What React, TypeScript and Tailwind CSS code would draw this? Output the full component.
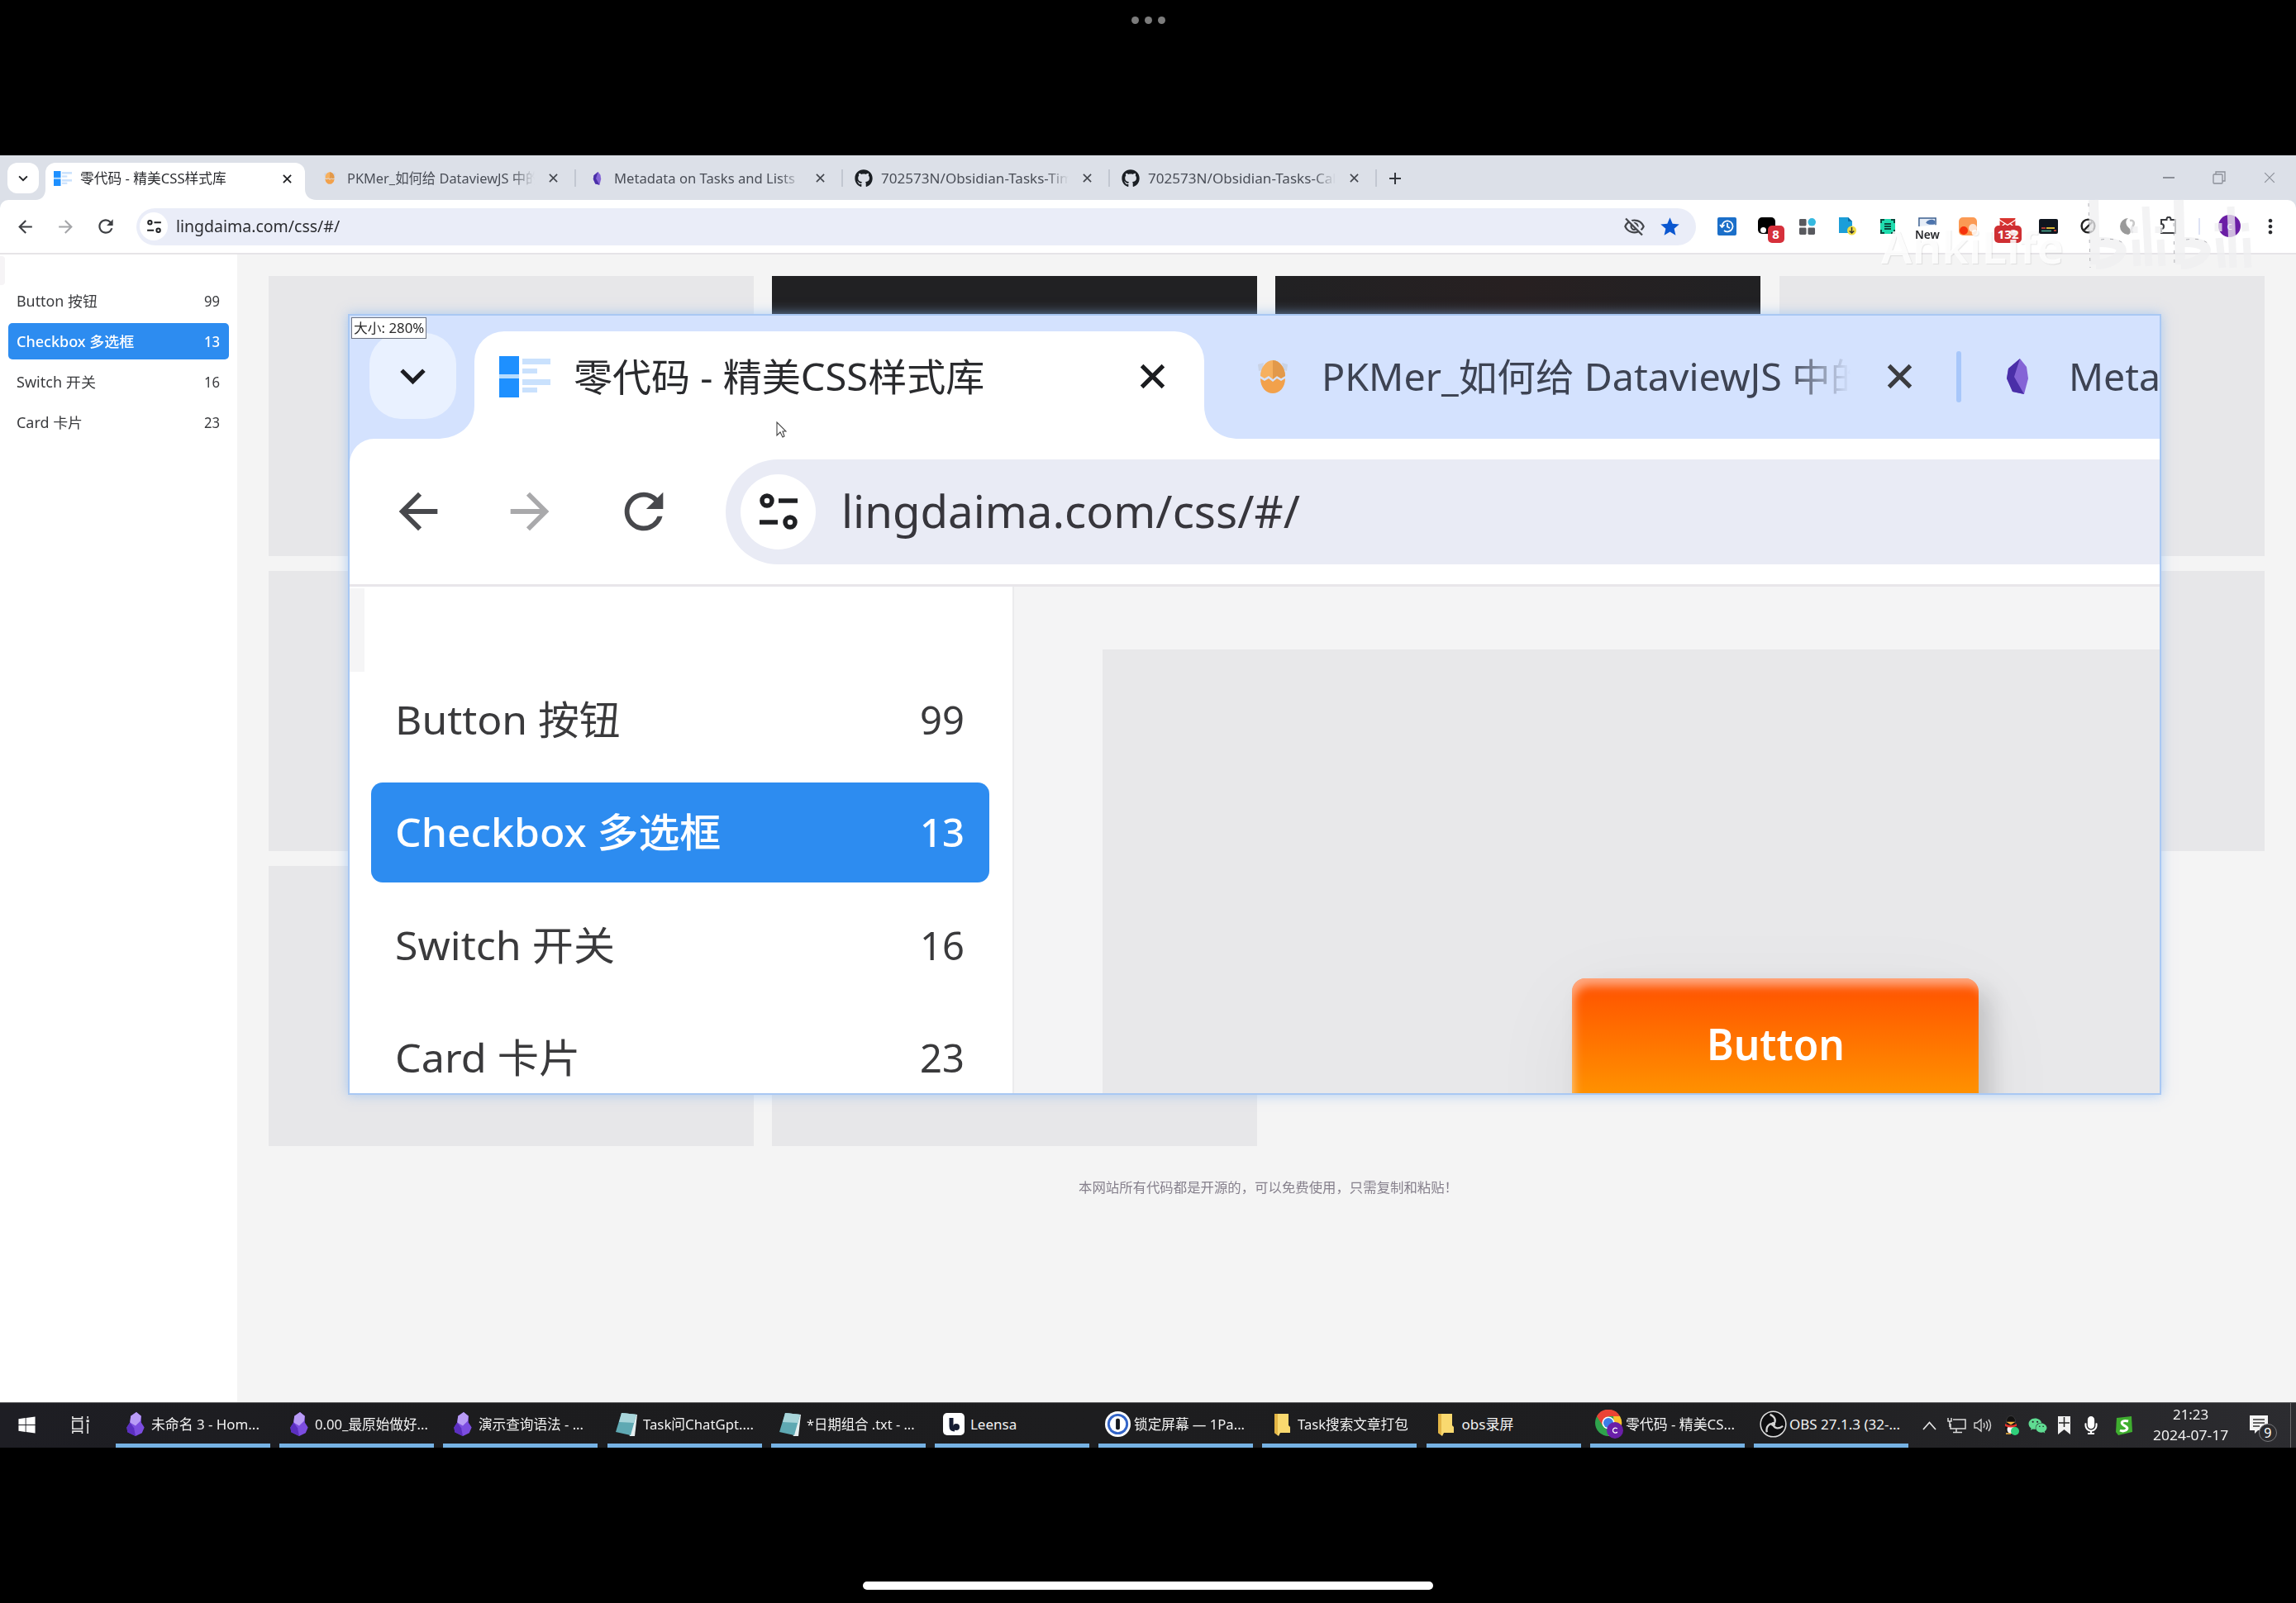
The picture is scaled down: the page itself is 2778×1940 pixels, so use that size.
import React, { useLayoutEffect, useRef, useState } from "react";
import {
  MdArrowBack,
  MdArrowForward,
  MdRefresh,
  MdStar,
  MdMoreVert,
  MdOutlineVisibilityOff,
  MdOutlineExtension,
} from "react-icons/md";
import { FaGithub, FaWindows, FaWeixin, FaMicrophone } from "react-icons/fa";

/** Single line of text squeezed or stretched horizontally to a fixed width. */
function Fit({ w, className = "", children }: { w: number; className?: string; children: React.ReactNode }) {
  const ref = useRef<HTMLSpanElement>(null);
  const [scale, setScale] = useState(1);
  useLayoutEffect(() => {
    if (ref.current) setScale(w / ref.current.offsetWidth);
  }, [w]);
  return (
    <span className={"block shrink-0 leading-[1.4] " + className} style={{ width: w }}>
      <span
        ref={ref}
        className="inline-block origin-left whitespace-nowrap align-top"
        style={{ transform: `scaleX(${scale})` }}
      >
        {children}
      </span>
    </span>
  );
}

function Cross({ className, stroke = 2 }: { className: string; stroke?: number }) {
  return (
    <svg viewBox="0 0 12 12" className={className} preserveAspectRatio="none">
      <path d="M1 1 11 11M11 1 1 11" stroke="currentColor" strokeWidth={stroke} fill="none" />
    </svg>
  );
}

function Chevron({ className }: { className: string }) {
  return (
    <svg viewBox="0 0 32 20" className={className}>
      <path d="M3 3 16 16 29 3" stroke="currentColor" strokeWidth="5" fill="none" />
    </svg>
  );
}

function SiteLogo({ className }: { className: string }) {
  return (
    <svg viewBox="0 0 62 50" className={className} preserveAspectRatio="none">
      <rect width="24" height="22" fill="#1e90ff" />
      <rect y="22" width="24" height="5" fill="#b5dcff" />
      <rect y="27" width="24" height="23" fill="#1e90ff" />
      <rect x="28" y="3" width="34" height="7" fill="#c9e1fd" />
      <rect x="28" y="15" width="18" height="6" fill="#c9e1fd" />
      <rect x="28" y="28" width="34" height="7" fill="#c9e1fd" />
      <rect x="28" y="38" width="18" height="6" fill="#c9e1fd" />
    </svg>
  );
}

function EggLogo({ className }: { className: string }) {
  return (
    <svg viewBox="0 0 38 40" className={className}>
      <path d="M1 5 8 3 6 12 2 13ZM37 5 30 3 32 12 36 13Z" fill="#c9d3e6" />
      <path d="M19 0C28 0 34 10 34 19L29 22 24 19 19 23 14 19 9 22 4 19C4 10 10 0 19 0Z" fill="#f6b05e" />
      <path d="M4 22 9 25 14 22 19 26 24 22 29 25 34 22C34 33 27 40 19 40S4 33 4 22Z" fill="#f2a14b" />
      <path d="M19 0C28 0 34 10 34 19L29 22 24 19 19 23Z" fill="#e2994a" />
    </svg>
  );
}

function GemLogo({ className }: { className: string }) {
  return (
    <svg viewBox="0 0 28 44" className={className}>
      <path d="M17 0 25 10 27 24 22 43 8 40 1 24 3 12Z" fill="#8464d6" />
      <path d="M17 0 3 12 1 24 8 40 22 43 10 22Z" fill="#4a2fa8" />
    </svg>
  );
}

function Sliders({ className }: { className: string }) {
  return (
    <svg viewBox="0 0 46 44" className={className}>
      <g fill="none" stroke="#1f2023" strokeWidth="5.5">
        <circle cx="9" cy="9" r="6" />
        <path d="M23 9H46M0 35H22" />
        <circle cx="37" cy="35" r="6" />
      </g>
    </svg>
  );
}

/** Concave corner that joins a tab to the toolbar below. */
function Flare({ className, flip }: { className: string; flip?: boolean }) {
  return (
    <svg viewBox="0 0 10 10" className={className} preserveAspectRatio="none">
      <path d={flip ? "M0 0V10H10C4 10 0 6 0 0Z" : "M10 0V10H0C6 10 10 6 10 0Z"} fill="#fff" />
    </svg>
  );
}

const tabs = [
  { title: "PKMer_如何给 DataviewJS 中的", w: 232, icon: <EggLogo className="h-[15px] w-[14px]" /> },
  { title: "Metadata on Tasks and Lists", w: 219, icon: <GemLogo className="h-[16px] w-[11px]" /> },
  { title: "702573N/Obsidian-Tasks-Tim", w: 232, icon: <FaGithub className="size-[22px] text-[#1b1f24]" /> },
  { title: "702573N/Obsidian-Tasks-Cal", w: 228, icon: <FaGithub className="size-[22px] text-[#1b1f24]" /> },
];

function TabStrip() {
  return (
    <div className="flex h-[54px] items-start bg-[#dce0e8]">
      <div className="mt-[9px] ml-[9px] flex h-[37px] w-[38px] shrink-0 items-center justify-center rounded-[12px] bg-white text-[#1f2023]">
        <Chevron className="h-[8px] w-[12px]" />
      </div>
      <div className="relative mt-[9px] ml-[8px] flex h-[45px] w-[314px] shrink-0 items-center rounded-t-[12px] bg-white pb-[7px] pl-[10px]">
        <Flare className="absolute bottom-0 -left-[12px] h-[13px] w-[12px]" />
        <Flare flip className="absolute -right-[14px] bottom-0 h-[13px] w-[14px]" />
        <SiteLogo className="h-[18px] w-[22px]" />
        <Fit w={177} className="ml-[10px] text-[17px] text-[#2b2c30]">零代码 - 精美CSS样式库</Fit>
        <Cross className="ml-[68px] size-[11px] text-[#1f2023]" />
      </div>
      <div className="mt-[8px] ml-[5px] flex">
        {tabs.map((t) => (
          <div key={t.title} className="flex h-[39px] w-[323px] items-center">
            <div className="ml-[13px] flex w-[24px] justify-center">{t.icon}</div>
            <div className="ml-[9px] w-[227px] overflow-hidden text-[17px] text-[#4a4e57] [mask-image:linear-gradient(to_right,black_88%,transparent)]">
              <Fit w={t.w}>{t.title}</Fit>
            </div>
            <Cross className="ml-[17px] size-[11px] text-[#44474e]" stroke={1.8} />
            <div className="ml-auto h-[21px] w-[2px] bg-[#c2c7d1]" />
          </div>
        ))}
        <svg viewBox="0 0 14 14" className="mt-[13px] ml-[15px] size-[14px]">
          <path d="M7 0V14M0 7H14" stroke="#33363c" strokeWidth="2" />
        </svg>
      </div>
      <div className="mt-[19px] mr-[25px] ml-auto flex items-center text-[#8b8f98]">
        <div className="h-[1.5px] w-[14px] bg-current" />
        <svg viewBox="0 0 16 16" className="ml-[46px] size-[16px]" fill="none" stroke="currentColor" strokeWidth="1.3">
          <rect x="1" y="4" width="11" height="11" rx="1" />
          <path d="M4 4V1H15V12H12" />
        </svg>
        <Cross className="ml-[46px] size-[14px]" stroke={1} />
      </div>
    </div>
  );
}

function Extensions() {
  return (
    <div className="mt-[22px] ml-[13px] flex h-[44px] items-start">
      <div className="flex w-[48.6px] justify-center">
        <svg viewBox="0 0 23 22" className="h-[22px] w-[23px]">
          <rect width="23" height="22" rx="2" fill="#1b6fc9" />
          <path d="M5.5 11A6.5 6.5 0 1 1 8 16M3 9 5.5 12 8.5 9M12 7V11.5L15 13" fill="none" stroke="#fff" strokeWidth="1.7" />
        </svg>
      </div>
      <div className="relative flex w-[48.6px] justify-center">
        <div className="flex h-[20px] w-[21px] items-end rounded-[5px] bg-black pb-px pl-[3px]">
          <div className="size-[7px] rounded-full bg-white" />
        </div>
        <div className="absolute top-[10px] left-[25px] flex h-[21px] w-[20px] items-center justify-center rounded-[5px] bg-[#d6303b] text-[15px] leading-none font-bold text-white">8</div>
      </div>
      <div className="flex w-[48.6px] justify-center">
        <svg viewBox="0 0 22 22" className="mt-px size-[21px]">
          <rect x="1" y="1" width="9" height="9" rx="1.5" fill="#58595e" />
          <rect x="1" y="12" width="9" height="9" rx="1.5" fill="#58595e" />
          <rect x="12" y="12" width="9" height="9" rx="1.5" fill="#58595e" />
          <circle cx="17" cy="5" r="5" fill="#35b9e0" />
        </svg>
      </div>
      <div className="flex w-[48.6px] justify-center">
        <svg viewBox="0 0 22 22" className="size-[22px]">
          <path d="M1 0H12L17 5V19H1Z" fill="#1b9ed8" />
          <path d="M12 0V5H17Z" fill="#0b6ea8" />
          <circle cx="16.5" cy="16" r="5.5" fill="#f1dc42" />
          <path d="M16.5 12V19M13.7 16.5 16.5 19 19.3 16.5" stroke="#333" strokeWidth="1.5" fill="none" />
        </svg>
      </div>
      <div className="flex w-[48.6px] justify-center">
        <svg viewBox="0 0 18 18" className="mt-[2px] size-[18px]">
          <rect width="18" height="18" rx="2" fill="#1fdcae" />
          <path d="M1 5V1H5M13 1H17V5M17 13V17H13M5 17H1V13M5 6H13M5 9H13M5 12H13" stroke="#0b4a3e" strokeWidth="2" fill="none" />
        </svg>
      </div>
      <div className="flex w-[48.6px] flex-col items-center">
        <svg viewBox="0 0 24 12" className="h-[11px] w-[24px]">
          <path d="M1 12V1H23V10" stroke="#3c5f8f" strokeWidth="1.6" fill="#e6edf7" />
          <path d="M10 7C13 2 20 2 22 5V9C18 10 12 10 10 7Z" fill="#4d74ad" />
        </svg>
        <Fit w={30} className="-mt-px text-[15px] font-semibold text-[#26272b]">New</Fit>
      </div>
      <div className="flex w-[48.6px] justify-center">
        <svg viewBox="0 0 22 22" className="size-[22px]">
          <rect width="22" height="22" rx="5" fill="#fb9a54" />
          <circle cx="17" cy="13" r="5" fill="#fde3d2" />
          <circle cx="6" cy="16" r="5" fill="#f6330c" />
        </svg>
      </div>
      <div className="relative flex w-[48.6px] justify-center">
        <svg viewBox="0 0 24 14" className="mt-px h-[12px] w-[24px]">
          <path d="M1 0H23V14H1Z" fill="#d8342f" />
          <path d="M0 2 12 10 24 2M1 14 9 7M23 14 15 7" stroke="#fff" strokeWidth="1.5" fill="none" />
        </svg>
        <div className="absolute top-[10px] left-[8px] flex h-[21px] w-[33px] items-center justify-center rounded-[5px] bg-[#cf2f33] text-[15px] leading-none font-bold text-white">132</div>
      </div>
      <div className="flex w-[48.6px] justify-center">
        <svg viewBox="0 0 23 18" className="mt-[2px] h-[18px] w-[23px]">
          <rect width="23" height="18" rx="2" fill="#10161f" />
          <path d="M3 11H8M18 14H21" stroke="#e24b3b" strokeWidth="1.6" />
          <path d="M9 11H19" stroke="#f0c93a" strokeWidth="1.8" />
          <path d="M3 14.5H15" stroke="#49a98f" strokeWidth="1.6" />
        </svg>
      </div>
      <div className="flex w-[48.6px] justify-center">
        <svg viewBox="0 0 20 20" className="mt-px size-[19px]">
          <circle cx="10" cy="10" r="8.3" fill="none" stroke="#222" strokeWidth="2.6" />
          <path d="M10 10 16 4V16L5 15Z" fill="#d8d8d8" />
          <path d="M5 15 15 5" stroke="#222" strokeWidth="2.6" />
        </svg>
      </div>
      <div className="flex w-[48.6px] justify-center">
        <svg viewBox="0 0 22 22" className="size-[22px]">
          <path d="M11 1A10 10 0 0 0 11 21C16 19 14 14 11 12C8 9 7 4 11 1Z" fill="#9a9a9a" />
          <path d="M13 4C17 3 19 6 17 10S13 17 17 18" fill="none" stroke="#c9c9c9" strokeWidth="2.6" />
        </svg>
      </div>
      <div className="flex w-[48.6px] justify-center">
        <svg viewBox="0 0 22 22" className="-mt-px size-[22px]" fill="none" stroke="#3a3b3f" strokeWidth="2">
          <path d="M2 4H8.500V3.200A2.500 2.500 0 0 1 13.500 3.200V4H19V20H2V15A3 3 0 0 0 2 9Z" />
        </svg>
      </div>
      <div className="mt-[1px] ml-[12px] h-[20px] w-[2px] bg-[#dfe3f5]" />
      <div className="-mt-[3px] ml-[22px] flex size-[27px] items-center justify-center rounded-full bg-[#6b1ea5] text-[13px] text-white">c</div>
      <MdMoreVert className="-mt-[3px] ml-[22px] size-[28px] shrink-0 text-[#2a2b2f]" />
    </div>
  );
}

function Toolbar() {
  return (
    <div className="bg-[#dce0e8]">
      <div className="flex h-[64px] items-center rounded-t-[10px] bg-white">
        <div className="ml-[17px] flex w-[26px] justify-center"><MdArrowBack className="size-[25px] shrink-0 text-[#3d3f43]" /></div>
        <div className="ml-[23px] flex w-[26px] justify-center"><MdArrowForward className="size-[25px] shrink-0 text-[#a4a5a8]" /></div>
        <div className="ml-[23px] flex w-[26px] justify-center"><MdRefresh className="size-[26px] shrink-0 text-[#3d3f43]" /></div>
        <div className="ml-[24px] flex h-[45px] w-[1887px] shrink-0 items-center rounded-full bg-[#eaedf8]">
          <div className="ml-[4px] flex h-[34px] w-[34px] items-center justify-center rounded-full bg-white">
            <Sliders className="h-[16px] w-[17px]" />
          </div>
          <Fit w={198} className="ml-[10px] pt-px text-[19px] text-[#2b2c30]">lingdaima.com/css/#/</Fit>
          <MdOutlineVisibilityOff className="ml-auto size-[27px] text-[#45474c]" />
          <MdStar className="mr-[18px] ml-[16px] size-[27px] text-[#0b57d0]" />
        </div>
        <Extensions />
      </div>
    </div>
  );
}

const menu = [
  { name: "Button 按钮", count: "99", w: 98, big: 273 },
  { name: "Checkbox 多选框", count: "13", w: 142, big: 394, active: true },
  { name: "Switch 开关", count: "16", w: 96, big: 266 },
  { name: "Card 卡片", count: "23", w: 80, big: 224 },
];

function Sidebar() {
  return (
    <div className="relative w-[287px] shrink-0 bg-white pt-[34px]">
      <div className="absolute top-[2px] left-0 h-[35px] w-[6px] rounded-r-[4px] bg-[#f6f4f6]" />
      <div className="flex flex-col gap-[5px] pr-[10px] pl-[10px]">
        {menu.map((m) => (
          <div
            key={m.name}
            className={
              "flex h-[44px] items-center rounded-[5px] pr-[11px] pl-[10px] text-[17.5px] " +
              (m.active ? "bg-[#2d8cf0] font-medium text-white" : "text-[#3a3b3e]")
            }
          >
            <Fit w={m.w}>{m.name}</Fit>
            <Fit w={19} className="ml-auto">{m.count}</Fit>
          </div>
        ))}
      </div>
    </div>
  );
}

const cards = [
  "bg-[#e7e7e9]", "bg-[#212123]", "bg-[linear-gradient(90deg,#212123_0%,#272021_50%,#212123_100%)]", "bg-[#e7e7e9]",
  "bg-[#e7e7e9]", "bg-[#e7e7e9]", "bg-[#e7e7e9]", "bg-[#e7e7e9]",
  "bg-[#e7e7e9]", "bg-[#e7e7e9]",
];

function Gallery() {
  return (
    <div className="flex grow flex-col bg-[#f4f4f4] pt-[26px] pl-[38px]">
      <div className="grid w-max grid-cols-[repeat(4,587px)] auto-rows-[339px] gap-x-[22.2px] gap-y-[18px]">
        {cards.map((c, i) => (
          <div key={i} className={c} />
        ))}
      </div>
      <div className="mt-[39px] pl-[980px]">
        <Fit w={459} className="text-[16px] text-[#86808c]">本网站所有代码都是开源的，可以免费使用，只需复制和粘贴！</Fit>
      </div>
    </div>
  );
}

function Magnifier() {
  return (
    <div className="absolute top-[382px] left-[423px] flex h-[941px] w-[2190px] flex-col shadow-[0_0_0_2px_#a9c8f3,0_0_14px_2px_#8db8f0b0]">
      <div className="flex h-[149px] items-start overflow-hidden bg-[#d4e2fe]">
        <div className="mt-[21px] ml-[24px] flex h-[104px] w-[105px] shrink-0 items-center justify-center rounded-[38px] bg-[#e9f1ff] text-[#1c1d22]">
          <Chevron className="h-[21px] w-[33px]" />
        </div>
        <div className="relative mt-[19px] ml-[22px] flex h-[130px] w-[883px] shrink-0 items-center rounded-t-[36px] bg-white pb-[21px] pl-[30px]">
          <Flare className="absolute bottom-0 -left-[46px] h-[40px] w-[46px]" />
          <Flare flip className="absolute -right-[42px] bottom-0 h-[40px] w-[42px]" />
          <SiteLogo className="h-[50px] w-[62px]" />
          <Fit w={497} className="ml-[28px] text-[46px] text-[#2a2b2e]">零代码 - 精美CSS样式库</Fit>
          <Cross className="ml-[188px] h-[31px] w-[31px] text-[#1c1d20]" />
        </div>
        <div className="mt-[18px] flex h-[111px] items-center">
          <EggLogo className="ml-[64px] h-[42px] w-[38px]" />
          <div className="ml-[40px] w-[640px] overflow-hidden text-[46px] text-[#3d4353] [mask-image:linear-gradient(to_right,black_88%,transparent)]">
            <Fit w={662}>PKMer_如何给 DataviewJS 中的</Fit>
          </div>
          <Cross className="ml-[44px] h-[31px] w-[31px] text-[#3b3c40]" />
          <div className="ml-[53px] h-[62px] w-[6px] rounded-full bg-[#a8c7fa]" />
          <GemLogo className="ml-[54px] h-[44px] w-[28px]" />
          <Fit w={111} className="ml-[48px] text-[46px] text-[#3d4353]">Meta</Fit>
        </div>
      </div>
      <div className="bg-[#d4e2fe]">
        <div className="flex h-[176px] items-center rounded-tl-[30px] bg-white">
          <div className="ml-[60px] flex w-[46px] justify-center"><MdArrowBack className="size-[70px] shrink-0 text-[#47484c]" /></div>
          <div className="ml-[89px] flex w-[46px] justify-center"><MdArrowForward className="size-[70px] shrink-0 text-[#a9a9ab]" /></div>
          <div className="ml-[92px] flex w-[46px] justify-center"><MdRefresh className="size-[70px] shrink-0 text-[#47484c]" /></div>
          <div className="ml-[76px] flex h-[127px] grow items-center rounded-l-full bg-[#e9ebf5]">
            <div className="ml-[18px] flex size-[91px] items-center justify-center rounded-full bg-white">
              <Sliders className="h-[44px] w-[46px]" />
            </div>
            <Fit w={555} className="ml-[31px] text-[54px] text-[#37363c]">lingdaima.com/css/#/</Fit>
          </div>
        </div>
      </div>
      <div className="h-[3px] bg-[#e8e6ea]" />
      <div className="flex h-[613px] overflow-hidden">
        <div className="relative w-[804px] shrink-0 border-r-2 border-[#ebebed] bg-white pt-[100px]">
          <div className="absolute top-[2px] left-0 h-[101px] w-[18px] bg-[#f5f5f6]" />
          <div className="flex flex-col gap-[15.5px] pr-[28px] pl-[26px]">
            {menu.map((m) => (
              <div
                key={m.name}
                className={
                  "flex h-[121px] shrink-0 items-center rounded-[14px] pr-[30px] pl-[29px] text-[48px] " +
                  (m.active ? "bg-[#2d8cf0] font-medium text-white" : "text-[#3a3a3c]")
                }
              >
                <Fit w={m.big}>{m.name}</Fit>
                <Fit w={54} className="ml-auto">{m.count}</Fit>
              </div>
            ))}
          </div>
        </div>
        <div className="grow bg-[#f4f4f5] pt-[76px] pl-[107px]">
          <div className="h-[600px] bg-[#e8e8ea] pt-[398px] pl-[568px]">
            <div className="flex h-[200px] w-[492px] justify-center rounded-[16px] bg-[linear-gradient(#ff5000,#ff9100_139px)] pt-[43px] text-[52px] font-semibold text-white shadow-[14px_14px_28px_#00000026,0_28px_110px_#0000000f,inset_5px_12px_12px_-3px_#ffffff80]">
              <Fit w={167}>Button</Fit>
            </div>
          </div>
        </div>
      </div>
      <div className="absolute top-[2px] left-[2px] flex h-[26px] w-[91px] items-center justify-center border border-[#6d7280] bg-white text-[16px] text-[#2a2a2a]">
        <Fit w={85}>大小: 280%</Fit>
      </div>
      <svg viewBox="0 0 13 20" className="absolute top-[128px] left-[516px] h-[20px] w-[13px]">
        <path d="M1 1V17L5 13 8 19 10 18 8 12H12Z" fill="#fff" stroke="#444" strokeWidth="1.1" />
      </svg>
    </div>
  );
}

function Watermark() {
  return (
    <div className="absolute top-[240px] left-[2276px] flex items-start">
      <Fit w={221} className="mt-[19px] text-[55px] font-semibold text-white/85 [text-shadow:1px_1px_1px_#00000018]">AnkiLife</Fit>
      <svg viewBox="0 0 204 88" className="ml-[27px] h-[88px] w-[204px]" opacity="0.75">
        <g fill="none" stroke="#efeff1" strokeWidth="12">
          <path d="M9 2 11 80" />
          <path d="M112 2 114 80" />
          <path d="M14 53C34 52 46 58 42 66C38 74 26 80 12 80" />
          <path d="M117 53C137 52 148 58 144 66C140 74 128 80 115 80" />
          <path d="M58 34 58 42M60 50 62 82M72 10 76 82M88 34 88 42M90 50 92 82" strokeWidth="9" />
          <path d="M160 30 160 40M161 48 165 84M175 10 178 84M192 30 193 40M194 48 196 84" strokeWidth="9" />
        </g>
        <path d="M3 6 5 84M18 50C30 48 44 50 48 58M106 30 107 84M121 50C134 48 146 50 150 58" fill="none" stroke="#9a9aa0" strokeWidth="1" strokeDasharray="4 7" />
      </svg>
    </div>
  );
}

function Obsidian() {
  return (
    <svg viewBox="0 0 24 32" className="h-[31px] w-[24px]">
      <path d="M13 1 19 6 19 14 23 20 20 27 12 31 2 26 1 20 5 14 6 6Z" fill="#7c4de0" />
      <path d="M13 1 6 6 5 14 12 18 18 12 19 6Z" fill="#b99cf6" />
      <path d="M5 14 1 20 2 26 12 31 10 21Z" fill="#5b2fc0" />
    </svg>
  );
}
function Notepad() {
  return (
    <svg viewBox="0 0 28 30" className="h-[30px] w-[28px]">
      <path d="M8 1 27 3 24 29 18 29Z" fill="#e6eff0" />
      <path d="M8 1 26 3 19 28 1 24Z" fill="#5fa9b3" />
      <path d="M8 1 26 3 23 13 5 12Z" fill="#a8d5da" />
    </svg>
  );
}
function Folder() {
  return (
    <svg viewBox="0 0 20 28" className="h-[28px] w-[20px]">
      <path d="M1 1H18V15L20 17V24H8L6 28 1 24Z" fill="#f9d96f" />
      <path d="M1 1H5V27L1 24Z" fill="#e3b545" />
    </svg>
  );
}
function Leensa() {
  return (
    <svg viewBox="0 0 26 27" className="h-[27px] w-[26px]">
      <rect width="26" height="27" rx="5" fill="#fff" />
      <path d="M10 6V16Q10 20 14 20" stroke="#151c33" strokeWidth="5" fill="none" />
      <circle cx="16" cy="17" r="4" fill="#151c33" />
    </svg>
  );
}
function OnePassword() {
  return (
    <svg viewBox="0 0 32 32" className="size-[31px]">
      <circle cx="16" cy="16" r="16" fill="#fff" />
      <circle cx="16" cy="16" r="13" fill="#3264c8" />
      <circle cx="16" cy="16" r="10" fill="#fff" />
      <rect x="13.5" y="9" width="5" height="14" rx="2" fill="#16181d" />
    </svg>
  );
}
function Chrome() {
  return (
    <svg viewBox="0 0 34 35" className="h-[35px] w-[34px]">
      <circle cx="16" cy="16" r="16" fill="#2fa24c" />
      <path d="M2 8A16 16 0 0 1 30 8H16L9 19Z" fill="#ea4335" />
      <path d="M30 8A16 16 0 0 1 16 32L23 19 22 8Z" fill="#fbc02d" />
      <circle cx="16" cy="16" r="7.6" fill="#fff" />
      <circle cx="16" cy="16" r="6" fill="#3b7de8" />
      <circle cx="24" cy="25" r="10" fill="#6a1fa8" />
      <path d="M26.8 23.2A3 3 0 1 0 26.8 27" fill="none" stroke="#fff" strokeWidth="1.3" />
    </svg>
  );
}
function Obs() {
  return (
    <svg viewBox="0 0 34 34" className="size-[33px]">
      <circle cx="17" cy="17" r="15.8" fill="#0e0e10" stroke="#dcdcdc" strokeWidth="1.6" />
      <g fill="none" stroke="#d4d4d4" strokeWidth="2.4">
        <path d="M17 17C21 14 20 8 13 5" />
        <path d="M17 17C17.500 22 23 24 29 19.500" />
        <path d="M17 17C12.500 15.500 7.500 20 9 27" />
      </g>
      <circle cx="17" cy="17" r="2.6" fill="#d4d4d4" />
    </svg>
  );
}

const tasks = [
  { icon: <Obsidian />, text: "未命名 3 - Hom...", w: 131 },
  { icon: <Obsidian />, text: "0.00_最原始做好...", w: 137 },
  { icon: <Obsidian />, text: "演示查询语法 - ...", w: 127 },
  { icon: <Notepad />, text: "Task问ChatGpt....", w: 134 },
  { icon: <Notepad />, text: "*日期组合 .txt - ...", w: 131 },
  { icon: <Leensa />, text: "Leensa", w: 56 },
  { icon: <OnePassword />, text: "锁定屏幕 — 1Pa...", w: 134 },
  { icon: <Folder />, text: "Task搜索文章打包", w: 134 },
  { icon: <Folder />, text: "obs录屏", w: 63 },
  { icon: <Chrome />, text: "零代码 - 精美CS...", w: 132 },
  { icon: <Obs />, text: "OBS 27.1.3 (32-...", w: 134 },
];

function Taskbar() {
  return (
    <div className="flex h-[55px] items-start border-t border-[#5a5a5c] bg-[linear-gradient(90deg,#1e1e24_0%,#1c1c1e_20%,#1e1e20_75%,#2c2c30_100%)] text-[#f2f2f2]">
      <FaWindows className="mt-[15px] ml-[21px] size-[23px] shrink-0 text-white" />
      <svg viewBox="0 0 24 24" className="mt-[15px] ml-[42px] size-[23px] shrink-0" fill="none" stroke="#e4e4e4" strokeWidth="1.7">
        <path d="M2 1V4H14V1M2 23V20H14V23M2 7H14V17H2ZM21 1V4M21 10V23" />
        <path d="M21 5.500V8.500" strokeWidth="3.500" />
      </svg>
      <div className="ml-[31px] flex gap-[11.2px]">
        {tasks.map((t, i) => (
          <div key={i} className="flex h-[54px] w-[187px] shrink-0 flex-col">
            <div className="flex h-[49px] items-center pt-[2px]">
              <div className="ml-[6px] flex w-[35px] justify-center">{t.icon}</div>
              <Fit w={t.w} className="ml-[2px] text-[17px]">{t.text}</Fit>
            </div>
            <div className="h-[5px] bg-[#76b2e4]" />
          </div>
        ))}
      </div>
      <div className="flex h-[54px] grow items-center">
        <svg viewBox="0 0 17 11" className="ml-[17px] h-[11px] w-[17px] shrink-0"><path d="M1 10 8.500 1.500 16 10" fill="none" stroke="#e6e6e6" strokeWidth="1.7" /></svg>
        <svg viewBox="0 0 24 20" className="ml-[12px] h-[20px] w-[24px] shrink-0" fill="none" stroke="#dcdcdc" strokeWidth="1.5">
          <path d="M8 3H23V14H5V8M12 14V18M8 18.500H19M2 1V5H6V1M4 5V12" />
        </svg>
        <svg viewBox="0 0 22 20" className="ml-[9px] h-[20px] w-[22px] shrink-0" fill="none" stroke="#d2d2d2" strokeWidth="1.4">
          <path d="M1 7V13H4L9 17V3L4 7Z" />
          <path d="M12 7Q14 10 12 13M15 5Q18.500 10 15 15M18 3Q23 10 18 17" />
        </svg>
        <svg viewBox="0 0 20 24" className="ml-[14px] h-[24px] w-[20px] shrink-0">
          <ellipse cx="9" cy="7" rx="5.500" ry="6.500" fill="#111" stroke="#555" strokeWidth=".5" />
          <ellipse cx="9" cy="15" rx="7" ry="7" fill="#111" />
          <ellipse cx="9" cy="17" rx="4.500" ry="5" fill="#f5f5f5" />
          <path d="M2 10Q9 14 16 10V13Q9 16 2 13Z" fill="#e0322c" />
          <path d="M6 8.500H12L9 10.500ZM3 22H9" fill="#f3b13c" stroke="#f3b13c" strokeWidth="1.500" />
          <circle cx="14" cy="19" r="5" fill="#2fd07a" />
        </svg>
        <FaWeixin className="ml-[10px] size-[23px] shrink-0 text-[#5fdc92]" />
        <svg viewBox="0 0 15 22" className="ml-[13px] h-[22px] w-[15px] shrink-0">
          <path d="M0 0H15V22L7.500 16 0 22Z" fill="#f0f0f0" />
          <path d="M7.500 1V13M1 8H14" stroke="#222" strokeWidth="1.500" />
        </svg>
        <FaMicrophone className="ml-[14px] size-[22px] shrink-0 text-white" />
        <svg viewBox="0 0 22 23" className="ml-[18px] h-[23px] w-[22px] shrink-0">
          <path d="M2 2 20 0 21 19 4 23 1 19Z" fill="#3fae2f" />
          <path d="M16 6C9 4 6 8 10 10.500S17 14 13 17C11 18 8 18 6 17" fill="none" stroke="#fff" strokeWidth="3" />
        </svg>
        <div className="-mt-[2px] ml-[24px] flex shrink-0 flex-col items-center text-[16.5px]">
          <Fit w={43} className="!leading-[25px]">21:23</Fit>
          <Fit w={91} className="!leading-[25px]">2024-07-17</Fit>
        </div>
        <div className="relative -mt-[2px] ml-[26px] shrink-0">
          <svg viewBox="0 0 24 24" className="size-[24px]">
            <path d="M0 1H22V19H10L6 23V19H0Z" fill="#f4f4f4" />
            <path d="M4 6H18M4 10H18M4 14H12" stroke="#333" strokeWidth="1.500" />
          </svg>
          <div className="absolute top-[11px] left-[11px] flex size-[22px] items-center justify-center rounded-full border border-[#77777b] bg-[#2b2b2e] text-[16px] leading-none text-white">9</div>
        </div>
        <div className="mr-[6px] ml-auto h-[54px] w-px bg-[#6a6a6c]" />
      </div>
    </div>
  );
}

export default function App() {
  return (
    <div className="relative flex h-[1940px] w-[2778px] flex-col overflow-hidden bg-black font-['Noto_Sans','Noto_Sans_CJK_SC',sans-serif]">
      <div className="flex h-[188px] justify-center gap-[7px] pt-[20px]">
        <div className="size-[9px] rounded-full bg-[#7c7c7c]" />
        <div className="size-[9px] rounded-full bg-[#7c7c7c]" />
        <div className="size-[9px] rounded-full bg-[#7c7c7c]" />
      </div>
      <TabStrip />
      <Toolbar />
      <div className="h-[2px] bg-[#e6e4e7]" />
      <div className="flex h-[1389px]">
        <Sidebar />
        <Gallery />
      </div>
      <Taskbar />
      <div className="flex grow items-end justify-center pb-[16px]">
        <div className="h-[10px] w-[690px] rounded-full bg-white" />
      </div>
      <Magnifier />
      <Watermark />
    </div>
  );
}
